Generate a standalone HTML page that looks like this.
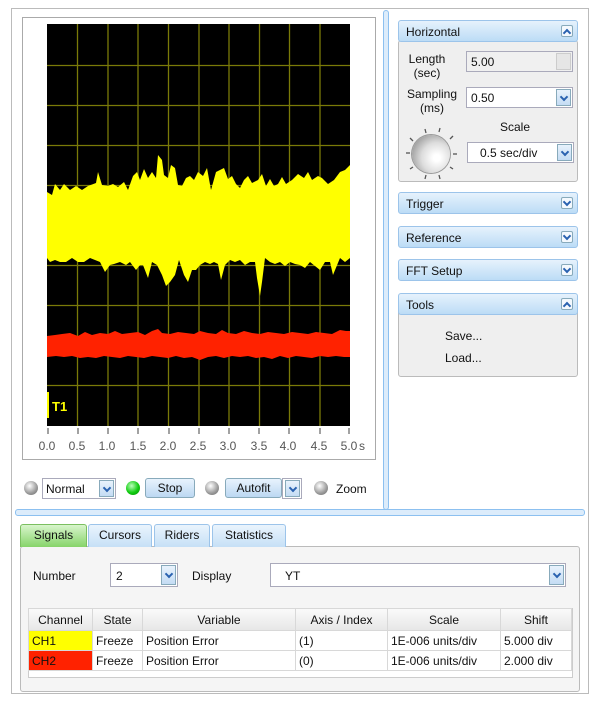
<!DOCTYPE html>
<html><head><meta charset="utf-8"><style>
body{margin:0;width:600px;height:714px;background:#fff;font-family:"Liberation Sans",sans-serif;font-size:12px;color:#111;position:relative;overflow:hidden}
.a{position:absolute}
.hdr{position:absolute;left:398px;width:180px;height:22px;border:1px solid #9cc4ea;border-radius:3px;background:linear-gradient(#e6f2fc,#bcdcf6);box-sizing:border-box}
.hdr span{position:absolute;left:7px;top:4px;font-size:12px}
.hb{position:absolute;right:4px;top:4px;width:12px;height:12px;border:1px solid #8ab;background:#f4f9fe;border-radius:2px;box-sizing:border-box}
.combo{position:absolute;border:1px solid #aab;background:#fff;box-sizing:border-box}
.dd{position:absolute;right:1px;top:1px;bottom:1px;width:15px;background:linear-gradient(#e8f2fc,#c4dcf4);border:1px solid #8ab;box-sizing:border-box}
.dn,.up{position:absolute;left:50%;top:50%;width:4px;height:4px;border-right:2px solid #2a62b0;border-bottom:2px solid #2a62b0;margin-left:-3px}
.dn{transform:rotate(45deg);margin-top:-4px}
.up{transform:rotate(-135deg);margin-top:-1px}
.led{position:absolute;width:14px;height:14px;border-radius:50%;background:radial-gradient(circle at 40% 35%,#fff,#999 60%,#666)}
.btn{position:absolute;height:20px;border:1px solid #8ab;border-radius:3px;background:linear-gradient(#e8f3fd,#bcd8f2);box-sizing:border-box;text-align:center;line-height:18px}
.tab{position:absolute;top:524px;height:23px;border:1px solid #9cc4ea;border-bottom:none;border-radius:3px 3px 0 0;background:linear-gradient(#eaf4fd,#c6e0f6);box-sizing:border-box;text-align:center;line-height:21px}
table{border-collapse:collapse;font-size:12px}
td{border:1px solid #d8d8d8;padding:0 3px;height:19px;white-space:nowrap}
</style></head><body>
<div class="a" style="left:11px;top:8px;width:578px;height:686px;border:1px solid #bbb;box-sizing:border-box"></div>
<div class="a" style="left:22px;top:17px;width:354px;height:443px;border:1px solid #aaa;box-sizing:border-box;background:#fff"></div>
<svg class="a" style="left:0;top:0" width="400" height="470">
<rect x="47" y="24" width="303" height="402" fill="#000"/>
<g stroke="#7a7a08" stroke-width="1.3">
<line x1="77.5" y1="24" x2="77.5" y2="426"/><line x1="108" y1="24" x2="108" y2="426"/><line x1="138" y1="24" x2="138" y2="426"/><line x1="168.5" y1="24" x2="168.5" y2="426"/><line x1="199" y1="24" x2="199" y2="426"/><line x1="229" y1="24" x2="229" y2="426"/><line x1="259.5" y1="24" x2="259.5" y2="426"/><line x1="289.5" y1="24" x2="289.5" y2="426"/><line x1="320" y1="24" x2="320" y2="426"/>
<line x1="47" y1="65.5" x2="350" y2="65.5"/><line x1="47" y1="105.5" x2="350" y2="105.5"/><line x1="47" y1="145.5" x2="350" y2="145.5"/><line x1="47" y1="185.5" x2="350" y2="185.5"/><line x1="47" y1="225.5" x2="350" y2="225.5"/><line x1="47" y1="265.5" x2="350" y2="265.5"/><line x1="47" y1="305.5" x2="350" y2="305.5"/><line x1="47" y1="345.5" x2="350" y2="345.5"/><line x1="47" y1="385.5" x2="350" y2="385.5"/>
</g>
<polygon fill="#ffff00" points="47,192 52,195 55,184 60,190 64,184 70,190 76,186 82,190 88,186 96,183 98,172 102,185 108,186 113,184 118,187 124,182 128,190 133,176 137,172 140,180 144,169 148,178 152,172 156,178 158,155 162,160 164,175 168,178 171,165 175,168 178,185 182,186 186,178 190,176 194,180 198,172 203,176 207,168 211,190 216,172 220,170 224,168 228,179 232,176 236,184 240,188 244,180 248,176 252,183 258,180 262,174 266,186 270,179 274,186 278,184 282,177 286,184 292,180 298,174 304,178 308,172 312,180 318,176 322,178 328,184 334,180 340,172 345,170 350,165 350,258 345,262 340,258 333,275 330,262 325,262 320,270 315,266 310,262 305,268 300,265 295,264 290,262 285,266 280,262 275,264 270,262 265,258 262,282 260,296 257,278 255,262 250,262 245,265 240,260 235,262 230,260 225,265 221,280 218,264 214,262 210,264 205,262 200,265 196,270 192,270 188,282 184,275 179,260 175,275 170,282 166,286 162,275 157,265 152,262 148,278 143,265 140,265 136,270 130,262 126,265 120,262 114,264 110,265 105,272 100,262 95,260 90,258 84,262 78,262 72,258 66,262 60,262 55,260 50,262 47,258"/>
<polygon fill="#ff2200" points="47,336 55,335 62,334 70,333 78,336 85,332 92,335 100,333 108,334 115,331 122,334 130,333 138,332 145,335 152,331 158,329 162,333 170,334 178,332 186,333 194,334 200,331 208,333 216,334 222,330 228,333 236,334 244,331 252,333 260,334 268,332 276,333 284,334 292,332 300,333 308,334 316,332 324,333 332,334 340,330 346,331 350,331 350,357 344,357 336,356 328,357 320,356 312,358 304,357 296,356 288,358 280,356 272,359 264,357 256,358 248,356 240,357 232,356 224,358 216,356 208,357 200,360 192,357 184,358 176,356 168,358 160,357 152,356 144,358 136,357 128,356 120,358 112,357 104,356 96,358 88,357 80,358 72,356 64,357 56,356 47,357"/>
<rect x="47" y="392" width="2" height="26" fill="#ff0"/>
<text x="52" y="411" fill="#ff0" font-size="13" font-family="Liberation Sans" font-weight="bold">T1</text>
<g stroke="#444"><line x1="48" y1="428" x2="48" y2="434"/><line x1="78" y1="428" x2="78" y2="434"/><line x1="108" y1="428" x2="108" y2="434"/><line x1="138" y1="428" x2="138" y2="434"/><line x1="169" y1="428" x2="169" y2="434"/><line x1="199" y1="428" x2="199" y2="434"/><line x1="229" y1="428" x2="229" y2="434"/><line x1="259" y1="428" x2="259" y2="434"/><line x1="289" y1="428" x2="289" y2="434"/><line x1="320" y1="428" x2="320" y2="434"/><line x1="349" y1="428" x2="349" y2="434"/></g>
<g font-size="12" fill="#555" font-family="Liberation Sans" text-anchor="middle">
<text x="47" y="450">0.0</text><text x="77" y="450">0.5</text><text x="107" y="450">1.0</text><text x="138" y="450">1.5</text><text x="168" y="450">2.0</text><text x="198" y="450">2.5</text><text x="228" y="450">3.0</text><text x="259" y="450">3.5</text><text x="288" y="450">4.0</text><text x="319" y="450">4.5</text><text x="349" y="450">5.0</text><text x="362" y="450">s</text></g>
</svg>
<div class="led" style="left:24px;top:481px"></div>
<div class="combo" style="left:42px;top:478px;width:74px;height:21px"><span class="a" style="left:3px;top:3px">Normal</span><div class="dd"><i class="dn"></i></div></div>
<div class="led" style="left:126px;top:481px;background:radial-gradient(circle at 40% 35%,#bfb,#1c1 55%,#080)"></div>
<div class="btn" style="left:145px;top:478px;width:50px">Stop</div>
<div class="led" style="left:205px;top:481px"></div>
<div class="btn" style="left:225px;top:478px;width:57px">Autofit</div>
<div class="combo" style="left:282px;top:478px;width:20px;height:21px"><div class="dd"><i class="dn"></i></div></div>
<div class="led" style="left:314px;top:481px"></div>
<span class="a" style="left:336px;top:482px">Zoom</span>
<div class="a" style="left:383px;top:10px;width:6px;height:500px;border:1px solid #8cc0f0;border-radius:3px;background:#dcecfb;box-sizing:border-box"></div>
<div class="a" style="left:15px;top:509px;width:570px;height:7px;border:1px solid #8cc0f0;border-radius:3px;background:#dcecfb;box-sizing:border-box"></div>
<div class="a" style="left:398px;top:40px;width:180px;height:142px;border:1px solid #bbb;border-radius:3px;background:#efefef;box-sizing:border-box"></div>
<div class="hdr" style="top:20px"><span>Horizontal</span><div class="hb"><i class="up"></i></div></div>
<div class="a" style="left:402px;top:52px;width:50px;text-align:center;line-height:14px">Length<br>(sec)</div>
<div class="combo" style="left:466px;top:51px;width:107px;height:21px;background:#f0f0f0"><span class="a" style="left:4px;top:3px">5.00</span><div class="dd" style="background:#e6e6e6;border-color:#ccc"></div></div>
<div class="a" style="left:402px;top:87px;width:60px;text-align:center;line-height:14px">Sampling<br>(ms)</div>
<div class="combo" style="left:466px;top:87px;width:107px;height:21px"><span class="a" style="left:4px;top:3px">0.50</span><div class="dd"><i class="dn"></i></div></div>
<span class="a" style="left:500px;top:120px">Scale</span>
<svg class="a" style="left:402px;top:124px" width="60" height="60"><g stroke="#555" stroke-width="1.3"><line x1="4" y1="29" x2="8" y2="29"/><line x1="8" y1="14" x2="11" y2="17"/><line x1="23" y1="5" x2="24" y2="9"/><line x1="38" y1="4" x2="37" y2="8"/><line x1="51" y1="12" x2="48" y2="15"/><line x1="55" y1="30" x2="51" y2="30"/><line x1="51" y1="45" x2="48" y2="43"/><line x1="38" y1="55" x2="37" y2="51"/><line x1="23" y1="55" x2="24" y2="51"/><line x1="8" y1="45" x2="11" y2="43"/></g></svg>
<div class="a" style="left:412px;top:135px;width:38px;height:38px;border-radius:50%;background:radial-gradient(circle at 65% 60%,#fff 10%,#ddd 45%,#888 90%);box-shadow:0 0 0 1px #999"></div>
<div class="combo" style="left:467px;top:142px;width:107px;height:21px"><span class="a" style="left:12px;top:3px">0.5 sec/div</span><div class="dd"><i class="dn"></i></div></div>
<div class="hdr" style="top:192px"><span>Trigger</span><div class="hb"><i class="dn"></i></div></div>
<div class="hdr" style="top:226px"><span>Reference</span><div class="hb"><i class="dn"></i></div></div>
<div class="hdr" style="top:259px"><span>FFT Setup</span><div class="hb"><i class="dn"></i></div></div>
<div class="a" style="left:398px;top:305px;width:180px;height:72px;border:1px solid #bbb;border-radius:3px;background:#efefef;box-sizing:border-box"></div>
<div class="hdr" style="top:293px"><span>Tools</span><div class="hb"><i class="up"></i></div></div>
<span class="a" style="left:445px;top:329px">Save...</span>
<span class="a" style="left:445px;top:351px">Load...</span>
<div class="a" style="left:20px;top:546px;width:560px;height:146px;border:1px solid #bbb;border-radius:3px;background:#f5f5f5;box-sizing:border-box"></div>
<div class="tab" style="left:20px;width:67px;background:linear-gradient(#d8f5cc,#86d46a);border-color:#7bbf60">Signals</div>
<div class="tab" style="left:88px;width:64px">Cursors</div>
<div class="tab" style="left:154px;width:56px">Riders</div>
<div class="tab" style="left:212px;width:74px">Statistics</div>
<span class="a" style="left:33px;top:569px">Number</span>
<div class="combo" style="left:110px;top:563px;width:68px;height:24px"><span class="a" style="left:5px;top:5px">2</span><div class="dd"><i class="dn"></i></div></div>
<span class="a" style="left:192px;top:569px">Display</span>
<div class="combo" style="left:270px;top:563px;width:296px;height:24px"><span class="a" style="left:14px;top:5px">YT</span><div class="dd"><i class="dn"></i></div></div>
<div class="a" style="left:28px;top:608px;width:545px;height:70px;border:1px solid #ccc;background:#fff;box-sizing:border-box"></div>
<table class="a" style="left:28px;top:608px;width:544px">
<tr style="background:linear-gradient(#fafafa,#e6e6e6);text-align:center"><td style="width:57px;height:21px">Channel</td><td style="width:43px">State</td><td style="width:146px">Variable</td><td style="width:85px">Axis / Index</td><td style="width:106px">Scale</td><td>Shift</td></tr>
<tr><td style="background:#ffff00">CH1</td><td>Freeze</td><td>Position Error</td><td>(1)</td><td>1E-006 units/div</td><td>5.000 div</td></tr>
<tr><td style="background:#ff2200">CH2</td><td>Freeze</td><td>Position Error</td><td>(0)</td><td>1E-006 units/div</td><td>2.000 div</td></tr>
</table>
</body></html>
